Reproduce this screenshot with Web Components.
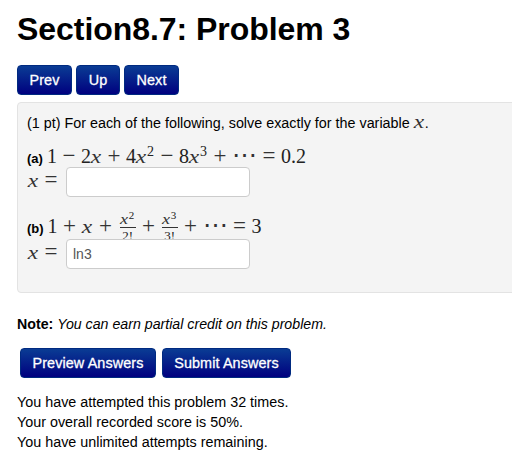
<!DOCTYPE html>
<html>
<head>
<meta charset="utf-8">
<title>Section8.7: Problem 3</title>
<style>
  html, body { margin: 0; padding: 0; background: #fff; overflow: hidden; height: 469px; }
  body { font: 14.35px/20px "Liberation Sans", Arial, sans-serif; color: #000; }
</style>
</head>
<body>
<problem-page>
  <span slot="title">Section8.7: Problem 3</span>
  <nav-row slot="nav">
    <blue-button width="55">Prev</blue-button>
    <blue-button width="44">Up</blue-button>
    <blue-button width="55">Next</blue-button>
  </nav-row>
  <problem-well slot="problem">
    <p-line>(1 pt) For each of the following, solve exactly for the variable <m-x></m-x>.</p-line>
    <answer-part label="(a)" style="--gap-top: 14px; --formula-h: 20px">
      <m-row slot="formula">1<m-op>−</m-op>2<m-x></m-x><m-op>+</m-op>4<m-x></m-x><m-sup>2</m-sup><m-op>−</m-op>8<m-x></m-x><m-sup>3</m-sup><m-op>+</m-op><m-dots>⋯</m-dots><m-op>=</m-op>0.2</m-row>
    </answer-part>
    <answer-part label="(b)" value="ln3" style="--gap-top: 20px; --formula-h: 22px">
      <m-row slot="formula">1<m-op>+</m-op><m-x></m-x><m-op w="26">+</m-op><m-frac><m-x size="14"></m-x><m-sup slot="sup">2</m-sup><span slot="den">2!</span></m-frac><m-op>+</m-op><m-frac><m-x size="14"></m-x><m-sup slot="sup">3</m-sup><span slot="den">3!</span></m-frac><m-op>+</m-op><m-dots>⋯</m-dots><m-op>=</m-op>3</m-row>
    </answer-part>
  </problem-well>
  <span slot="note"><b>Note:</b> <i>You can earn partial credit on this problem.</i></span>
  <nav-row slot="actions">
    <blue-button width="136">Preview Answers</blue-button>
    <blue-button width="129">Submit Answers</blue-button>
  </nav-row>
  <span slot="status">You have attempted this problem 32 times.<br>Your overall recorded score is 50%.<br>You have unlimited attempts remaining.</span>
</problem-page>

<script>
function shadow(el, html) {
  el.attachShadow({ mode: 'open' }).innerHTML = html;
}

class ProblemPage extends HTMLElement {
  constructor() {
    super();
    shadow(this, `
      <style>
        :host { display: block; padding-left: 17px; width: 495px; overflow: hidden; }
        h1 { margin: 0; padding-top: 10px; font-size: 32px; line-height: 38px; font-weight: bold; color: #000; letter-spacing: -0.05px; }
        .nav { margin-top: 17px; }
        .problem { margin-top: 7px; }
        .note { margin-top: 21px; font-size: 14.2px; }
        .actions { margin: 14px 0 0 3px; --row-gap: 6px; }
        .status { margin-top: 14px; }
      </style>
      <h1><slot name="title"></slot></h1>
      <div class="nav"><slot name="nav"></slot></div>
      <div class="problem"><slot name="problem"></slot></div>
      <div class="note"><slot name="note"></slot></div>
      <div class="actions"><slot name="actions"></slot></div>
      <div class="status"><slot name="status"></slot></div>
    `);
  }
}

class NavRow extends HTMLElement {
  constructor() {
    super();
    shadow(this, `
      <style>:host { display: flex; gap: var(--row-gap, 4px); }</style>
      <slot></slot>
    `);
  }
}

class BlueButton extends HTMLElement {
  constructor() {
    super();
    shadow(this, `
      <style>
        :host {
          display: flex; align-items: center; justify-content: center;
          box-sizing: border-box; height: 30px;
          width: ${this.getAttribute('width')}px;
          border-radius: 4px; border: 1px solid #002a80;
          background: linear-gradient(#0a3c94, #00007f);
          color: #fff; font-size: 14.4px; font-weight: normal;
          letter-spacing: 0.1px; -webkit-text-stroke: 0.3px #fff;
        }
      </style>
      <slot></slot>
    `);
  }
}

class ProblemWell extends HTMLElement {
  constructor() {
    super();
    shadow(this, `
      <style>
        :host {
          display: block; box-sizing: border-box; height: 191px; width: 520px;
          padding: 10px 9px;
          background: #f4f4f4; border: 1px solid #e3e3e3; border-radius: 4px;
        }
      </style>
      <slot></slot>
    `);
  }
}

class PLine extends HTMLElement {
  constructor() {
    super();
    shadow(this, `
      <style>:host { display: block; height: 20px; line-height: 20px; white-space: nowrap; }</style>
      <slot></slot>
    `);
  }
}

class AnswerPart extends HTMLElement {
  constructor() {
    super();
    const label = this.getAttribute('label');
    const value = this.getAttribute('value') || '';
    shadow(this, `
      <style>
        :host { display: block; margin-top: var(--gap-top, 0); }
        .formula { display: flex; align-items: baseline; gap: 4px; height: var(--formula-h, 21px); }
        .label { font-size: 13px; font-weight: bold; }
        .entry { display: flex; align-items: flex-start; height: 30px; }
        .entry m-row { margin-top: 5px; }
        .box {
          box-sizing: border-box; width: 184px; height: 30px; margin-left: 2px;
          padding: 0 6px; display: flex; align-items: center;
          background: #fff; border: 1px solid #ccc; border-radius: 4px;
          font-size: 14px; color: #555;
          position: relative;
        }
      </style>
      <div class="formula"><span class="label">${label}</span><slot name="formula"></slot></div>
      <div class="entry">
        <m-row><m-x></m-x><m-op w="26">=</m-op></m-row>
        <div class="box" role="textbox">${value}</div>
      </div>
    `);
  }
}

class MRow extends HTMLElement {
  constructor() {
    super();
    shadow(this, `
      <style>
        :host {
          display: inline-flex; align-items: baseline; white-space: nowrap;
          font: 20px/16px "Liberation Serif", "DejaVu Serif", serif; color: #222;
        }
      </style>
      <slot></slot>
    `);
  }
}

// math x: scaled wider to get close to the math italic of the reference
class MX extends HTMLElement {
  constructor() {
    super();
    const size = parseInt(this.getAttribute('size')) || 18;
    shadow(this, `
      <style>
        :host {
          display: inline-block; width: ${Math.round(size * 0.61)}px; text-align: center;
          font: italic ${size}px/1 "Liberation Serif", serif; color: #333;
        }
        span { display: inline-block; transform: scaleX(1.3); }
      </style>
      <span>x</span>
    `);
  }
}

class MOp extends HTMLElement {
  constructor() {
    super();
    const w = this.getAttribute('w') || 24;
    shadow(this, `
      <style>
        :host { display: inline-block; width: ${w}px; text-align: center; font-size: 23px; color: #333; }
      </style>
      <slot></slot>
    `);
  }
}

class MDots extends HTMLElement {
  constructor() {
    super();
    shadow(this, `
      <style>
        :host { display: inline-block; width: 25px; text-align: center; font-size: 25px; color: #333; }
      </style>
      <slot></slot>
    `);
  }
}

class MSup extends HTMLElement {
  constructor() {
    super();
    shadow(this, `
      <style>
        :host {
          display: inline-block; width: 8px;
          font-size: var(--sup-size, 14px);
          transform: translateY(var(--sup-raise, -7px));
        }
      </style>
      <slot></slot>
    `);
  }
}

class MFrac extends HTMLElement {
  constructor() {
    super();
    shadow(this, `
      <style>
        :host {
          --sup-size: 11px; --sup-raise: -5px;
          display: inline-flex; flex-direction: column; width: 18px;
          box-sizing: border-box; padding: 0 1px;
          text-align: center; line-height: 16px;
          transform: translateY(-9px);
        }
        .num { display: flex; justify-content: center; align-items: baseline; height: 15px; margin-left: -1px; }
        .bar { height: 1px; background: #333; }
        .den { height: 13px; font-size: 13px; line-height: 16px; overflow: hidden; }
        ::slotted(m-sup) { width: 6px; }
      </style>
      <div class="num"><slot></slot><slot name="sup"></slot></div>
      <div class="bar"></div>
      <div class="den"><slot name="den"></slot></div>
    `);
  }
}

customElements.define('problem-page', ProblemPage);
customElements.define('nav-row', NavRow);
customElements.define('blue-button', BlueButton);
customElements.define('problem-well', ProblemWell);
customElements.define('p-line', PLine);
customElements.define('answer-part', AnswerPart);
customElements.define('m-row', MRow);
customElements.define('m-x', MX);
customElements.define('m-op', MOp);
customElements.define('m-dots', MDots);
customElements.define('m-sup', MSup);
customElements.define('m-frac', MFrac);
</script>
</body>
</html>
